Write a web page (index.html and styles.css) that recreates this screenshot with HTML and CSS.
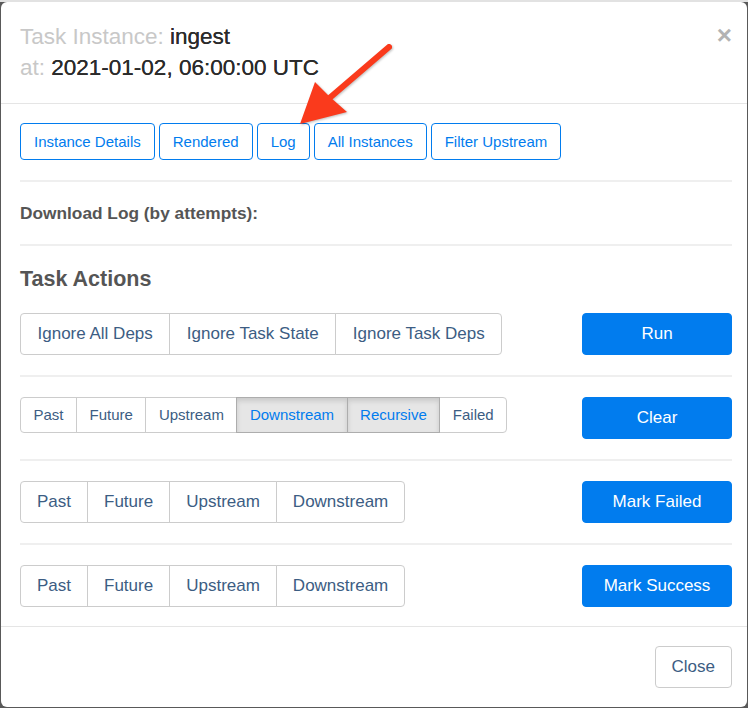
FILE: index.html
```html
<!DOCTYPE html>
<html lang="en">
<head>
    <meta charset="UTF-8">
    <meta name="viewport" content="width=device-width, initial-scale=1.0">
    <title>Task Instance: ingest</title>
    <link rel="stylesheet" href="styles.css">
</head>
<body>
    <div class="modal">
        <div class="modal-header">
            <h4 class="modal-title">
                <span class="muted">Task Instance:</span> ingest<br>
                <span class="muted">at:</span> 2021-01-02, 06:00:00 UTC
            </h4>
            <button class="close" type="button">&times;</button>
        </div>

        <div class="modal-body">
            <div class="nav-buttons">
                <a class="btn btn-outline">Instance Details</a>
                <a class="btn btn-outline">Rendered</a>
                <a class="btn btn-outline">Log</a>
                <a class="btn btn-outline">All Instances</a>
                <a class="btn btn-outline">Filter Upstream</a>
            </div>
            <hr>
            <div class="download">Download Log (by attempts):</div>
            <hr>
            <h4 class="section-title">Task Actions</h4>

            <div class="action-row">
                <div class="btn-group btn-group-run">
                    <button class="btn btn-default">Ignore All Deps</button>
                    <button class="btn btn-default">Ignore Task State</button>
                    <button class="btn btn-default">Ignore Task Deps</button>
                </div>
                <button class="btn btn-primary">Run</button>
            </div>
            <hr>
            <div class="action-row">
                <div class="btn-group btn-group-sm">
                    <button class="btn btn-default">Past</button>
                    <button class="btn btn-default">Future</button>
                    <button class="btn btn-default">Upstream</button>
                    <button class="btn btn-default active">Downstream</button>
                    <button class="btn btn-default active">Recursive</button>
                    <button class="btn btn-default">Failed</button>
                </div>
                <button class="btn btn-primary">Clear</button>
            </div>
            <hr>
            <div class="action-row">
                <div class="btn-group">
                    <button class="btn btn-default">Past</button>
                    <button class="btn btn-default">Future</button>
                    <button class="btn btn-default">Upstream</button>
                    <button class="btn btn-default">Downstream</button>
                </div>
                <button class="btn btn-primary">Mark Failed</button>
            </div>
            <hr>
            <div class="action-row">
                <div class="btn-group">
                    <button class="btn btn-default">Past</button>
                    <button class="btn btn-default">Future</button>
                    <button class="btn btn-default">Upstream</button>
                    <button class="btn btn-default">Downstream</button>
                </div>
                <button class="btn btn-primary">Mark Success</button>
            </div>
        </div>

        <div class="modal-footer">
            <button class="btn btn-default">Close</button>
        </div>
    </div>

    <!-- annotation arrow -->
    <svg class="annotation" width="748" height="708" viewBox="0 0 748 708">
        <line x1="389" y1="47" x2="326" y2="101" stroke="#fa3a1c" stroke-width="6" stroke-linecap="round"/>
        <polygon points="300,124 315,82 330,97 347,112" fill="#fa3a1c"/>
    </svg>
</body>
</html>
```

FILE: styles.css
```css
body {
    margin: 0;
    padding: 2px 1px 1px 1px;
    font-family: "Liberation Sans", Arial, sans-serif;
    background: linear-gradient(#e2e2e2 0 2px, #595959 2px);
    min-height: 100vh;
    box-sizing: border-box;
}

.modal {
    width: 746px;
    background: white;
    border-radius: 6px;
    overflow: hidden;
}

.modal-header {
    display: flex;
    justify-content: space-between;
    align-items: flex-start;
    padding: 19px 15px 20px 19px;
    border-bottom: 1px solid #e5e5e5;
}

.modal-title {
    margin: 0;
    font-size: 22.5px;
    font-weight: normal;
    line-height: 31px;
    color: #2b2b2b;
    text-shadow: 0 0 0.4px #2b2b2b;
}

.muted {
    color: #c8c8c8;
    text-shadow: none;
}

.close {
    border: none;
    background: none;
    padding: 0;
    margin: 3px 0 0 0;
    font-family: "Liberation Sans", Arial, sans-serif;
    font-size: 26px;
    font-weight: bold;
    line-height: 22px;
    color: #b3b3b3;
}

.modal-body {
    padding: 19px 15px 19px 19px;
}

hr {
    margin: 20px 0;
    border: 0;
    border-top: 2px solid #efefef;
}

.nav-buttons {
    display: flex;
    gap: 4px;
}

.btn {
    display: inline-block;
    box-sizing: border-box;
    font-family: "Liberation Sans", Arial, sans-serif;
    border: 1px solid transparent;
    border-radius: 4px;
    background: white;
    white-space: nowrap;
    cursor: pointer;
}

.btn-outline {
    font-size: 15px;
    line-height: 21px;
    padding: 7px 13px;
    color: #017cee;
    border-color: #017cee;
}

.download {
    font-size: 17.3px;
    font-weight: bold;
    line-height: 22px;
    color: #555;
}

.section-title {
    margin: 15px 0 21px 0;
    font-size: 21.5px;
    line-height: 26px;
    font-weight: bold;
    color: #555;
}

.action-row {
    display: flex;
    justify-content: space-between;
    align-items: flex-start;
}

.btn-group {
    display: flex;
}

.btn-default {
    font-size: 17px;
    line-height: 22px;
    padding: 9px 16px;
    color: #3c5d83;
    border-color: #ccc;
}

.btn-group-run .btn {
    padding: 9px 16.5px;
}

.btn-group .btn {
    border-radius: 0;
}

.btn-group .btn + .btn {
    margin-left: -1px;
}

.btn-group .btn:first-child {
    border-radius: 4px 0 0 4px;
}

.btn-group .btn:last-child {
    border-radius: 0 4px 4px 0;
}

.btn-group-sm .btn {
    font-size: 15px;
    line-height: 20px;
    padding: 7px 12.5px;
}

.btn-default.active {
    background: #e6e6e6;
    border-color: #adadad;
    color: #017cee;
    box-shadow: inset 0 3px 5px rgba(0,0,0,0.125);
    position: relative;
}

.btn-primary {
    width: 150px;
    font-size: 17px;
    line-height: 22px;
    padding: 9px 10px;
    color: white;
    background: #017cee;
    border-color: #017cee;
}

.modal-footer {
    display: flex;
    justify-content: flex-end;
    padding: 19px 15px 19px 19px;
    border-top: 1px solid #e5e5e5;
}

/* flecha de anotacion */
.annotation {
    position: fixed;
    top: 0;
    left: 0;
    pointer-events: none;
    filter: drop-shadow(1px 1px 1px rgba(0,0,0,0.25));
}
```
